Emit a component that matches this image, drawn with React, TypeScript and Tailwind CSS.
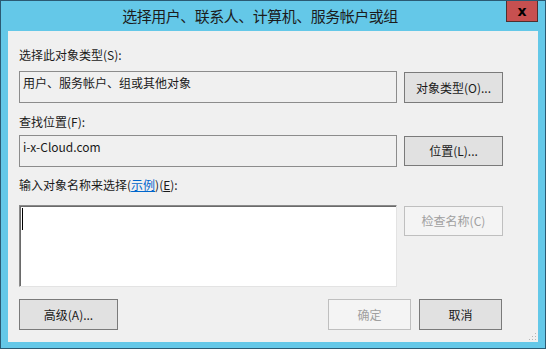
import React from "react";

const font = { fontFamily: '"Noto Sans CJK SC", "Microsoft YaHei", sans-serif' };

function Btn({ children, disabled, className = "" }: { children: React.ReactNode; disabled?: boolean; className?: string }) {
  return (
    <div
      className={
        "flex items-center justify-center text-[12px] leading-none border " +
        (disabled
          ? "bg-[#f4f4f4] border-[#bfbfbf] text-[#a0a0a0] "
          : "bg-[#e1e1e1] border-[#7a7a7a] text-[#1a1a1a] ") +
        className
      }
    >
      {children}
    </div>
  );
}

export default function App() {
  return (
    <div
      style={font}
      className="relative w-[546px] h-[349px] bg-[#64c8e8] border border-[#2b5a73] flex flex-col overflow-hidden"
    >
      {/* title bar */}
      <div className="h-[30px] flex items-center justify-center text-[15px] text-[#1c1c1c] pr-[26px] tracking-[-0.5px]">
        选择用户、联系人、计算机、服务帐户或组
      </div>
      <div className="absolute top-[-1px] right-[7px] w-[32px] h-[22px] bg-[#c75050] border border-[#4d3030] flex items-center justify-center">
        <span className="text-[14px] font-bold text-black leading-none" style={{ fontFamily: '"DejaVu Sans", sans-serif' }}>x</span>
      </div>

      {/* client */}
      <div className="relative mx-[7px] mb-[6px] flex-1 bg-[#f0f0f0] pl-[11px] pt-[16px] flex flex-col text-[12px] text-[#1a1a1a]">
        <div className="h-[16px] leading-[16px]">选择此对象类型(S):</div>
        <div className="mt-[8px] flex items-start gap-[7px]">
          <div className="w-[378px] h-[32px] border border-[#8c8c8c] bg-[#f0f0f0] pl-[3px] pt-[3px] leading-[16px]">
            用户、服务帐户、组或其他对象
          </div>
          <Btn className="w-[99px] h-[31px] mt-[1px]">对象类型(O)...</Btn>
        </div>

        <div className="mt-[11px] h-[16px] leading-[16px]">查找位置(F):</div>
        <div className="mt-[5px] flex items-start gap-[7px]">
          <div className="w-[378px] h-[32px] border border-[#8c8c8c] bg-[#f0f0f0] pl-[3px] pt-[3px] leading-[16px]">
            i-x-Cloud.com
          </div>
          <Btn className="w-[99px] h-[30px] mt-[1px]">位置(L)...</Btn>
        </div>

        <div className="mt-[10px] h-[16px] leading-[16px]">
          输入对象名称来选择(<span className="text-[#0066cc] underline">示例</span>)(<span className="underline">E</span>):
        </div>
        <div className="mt-[12px] flex items-start gap-[7px]">
          <div className="w-[378px] h-[82px] bg-white border border-t-[#8a8a8a] border-l-[#8a8a8a] border-b-[#e3e3e3] border-r-[#e3e3e3] shadow-[inset_1px_1px_0_#6a6a6a] pl-[2px] pt-[2px]">
            <div className="w-[1px] h-[22px] bg-black" />
          </div>
          <Btn disabled className="w-[99px] h-[30px] mt-[1px]">检查名称(C)</Btn>
        </div>

        <div className="mt-[12px] flex items-start">
          <Btn className="w-[99px] h-[31px]">高级(A)...</Btn>
          <Btn disabled className="ml-[210px] w-[83px] h-[31px]">确定</Btn>
          <Btn className="ml-[8px] w-[83px] h-[31px]">取消</Btn>
        </div>

        {/* resize grip */}
        <svg className="absolute right-[1px] bottom-[1px]" width="8" height="8" viewBox="0 0 8 8">
          <rect x="6" y="0" width="1" height="1" fill="#b5b5b5" />
          <rect x="3" y="3" width="1" height="1" fill="#b5b5b5" />
          <rect x="6" y="3" width="1" height="1" fill="#b5b5b5" />
          <rect x="0" y="6" width="1" height="1" fill="#b5b5b5" />
          <rect x="3" y="6" width="1" height="1" fill="#b5b5b5" />
          <rect x="6" y="6" width="1" height="1" fill="#b5b5b5" />
        </svg>
      </div>
    </div>
  );
}
